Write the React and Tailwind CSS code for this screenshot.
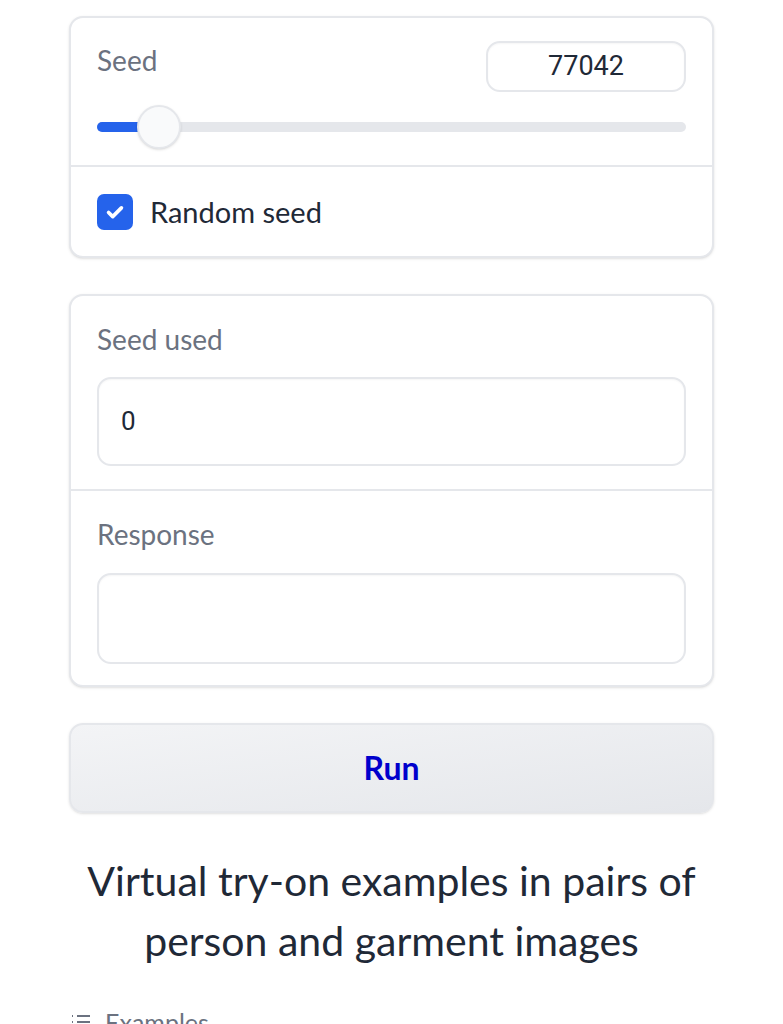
import React, { useState } from 'react';

const App = () => {
  const [seed] = useState(77042);
  const [randomSeed, setRandomSeed] = useState(true);
  const pct = 10.6;

  return (
    <div className="h-[1024px] w-[783px] overflow-hidden bg-white font-['Lato','Noto_Sans',sans-serif]">
      <div className="px-[69px] pt-[16px]">
        {/* Seed block */}
        <div className="rounded-[14px] border-2 border-[#e5e7eb] bg-white shadow-sm">
          <div className="px-[26px] pt-[23px] pb-[16px]">
            <div className="flex items-start justify-between">
              <span className="mt-[3px] text-[28px] leading-[32px] text-[#6b7280]">Seed</span>
              <div className="flex h-[51px] w-[200px] items-center justify-center rounded-[14px] border-2 border-[#e5e7eb] shadow-[inset_0_1px_2px_rgba(0,0,0,0.04)] font-['Roboto',sans-serif] text-[27px] text-[#1f2937]">
                {seed}
              </div>
            </div>
            <div className="relative mt-[13px] h-[44px]">
              <div className="absolute left-0 right-0 top-[17px] h-[10px] rounded-full bg-[#e5e7eb]" />
              <div className="absolute left-0 top-[17px] h-[10px] rounded-l-full bg-[#2563eb]" style={{ width: `${pct}%` }} />
              <div className="absolute top-0 h-[44px] w-[44px] -translate-x-1/2 rounded-full border-2 border-[#e5e7eb] bg-[#f9fafb] shadow-sm" style={{ left: `${pct}%` }} />
            </div>
          </div>
          <div className="border-t-2 border-[#e5e7eb] px-[26px] pt-[27px] pb-[26px]">
            <label className="flex h-[36px] items-center gap-[17px]">
              <span
                onClick={() => setRandomSeed(!randomSeed)}
                className="flex h-[36px] w-[36px] items-center justify-center rounded-[7px] bg-[#2563eb]"
              >
                {randomSeed && (
                  <svg width="22" height="22" viewBox="0 0 24 24" fill="none" stroke="white" strokeWidth="4" strokeLinecap="round" strokeLinejoin="round">
                    <path d="M5 12.5l4.5 4.5L19 7.5" />
                  </svg>
                )}
              </span>
              <span className="text-[29px] leading-[36px] text-[#1f2937]">Random seed</span>
            </label>
          </div>
        </div>

        {/* Outputs block */}
        <div className="mt-[36px] rounded-[14px] border-2 border-[#e5e7eb] bg-white shadow-sm">
          <div className="px-[26px] pt-[25px] pb-[23px]">
            <div className="text-[28px] leading-[36px] text-[#6b7280]">Seed used</div>
            <div className="mt-[20px] flex h-[89px] items-center rounded-[14px] border-2 border-[#e5e7eb] px-[22px] font-['Roboto',sans-serif] text-[26px] text-[#1f2937] shadow-[inset_0_1px_2px_rgba(0,0,0,0.04)]">
              0
            </div>
          </div>
          <div className="border-t-2 border-[#e5e7eb] px-[26px] pt-[25px] pb-[21px]">
            <div className="text-[28px] leading-[36px] text-[#6b7280]">Response</div>
            <div className="mt-[21px] h-[91px] rounded-[14px] border-2 border-[#e5e7eb] shadow-[inset_0_1px_2px_rgba(0,0,0,0.04)]" />
          </div>
        </div>

        {/* Run button */}
        <button className="mt-[36px] flex h-[90px] w-full items-center justify-center rounded-[14px] border-2 border-[#e5e7eb] bg-gradient-to-br from-[#f3f4f6] to-[#e5e7eb] text-[32px] font-bold text-[#0000cc] shadow-sm">
          Run
        </button>

        {/* Heading */}
        <h2 className="mt-[38px] text-center text-[41px] leading-[60px] text-[#1f2937]">
          Virtual try-on examples in pairs of person and garment images
        </h2>

        <div className="mt-[36px] flex items-center gap-[12px] text-[25px] leading-[30px] text-[#6b7280]">
          <svg width="24" height="24" viewBox="0 0 24 24" fill="none" stroke="#6b7280" strokeWidth="2">
            <path d="M8 6h13M8 12h13M8 18h13M3 6h1M3 12h1M3 18h1" />
          </svg>
          <span>Examples</span>
        </div>
      </div>
    </div>
  );
};

export default App;
